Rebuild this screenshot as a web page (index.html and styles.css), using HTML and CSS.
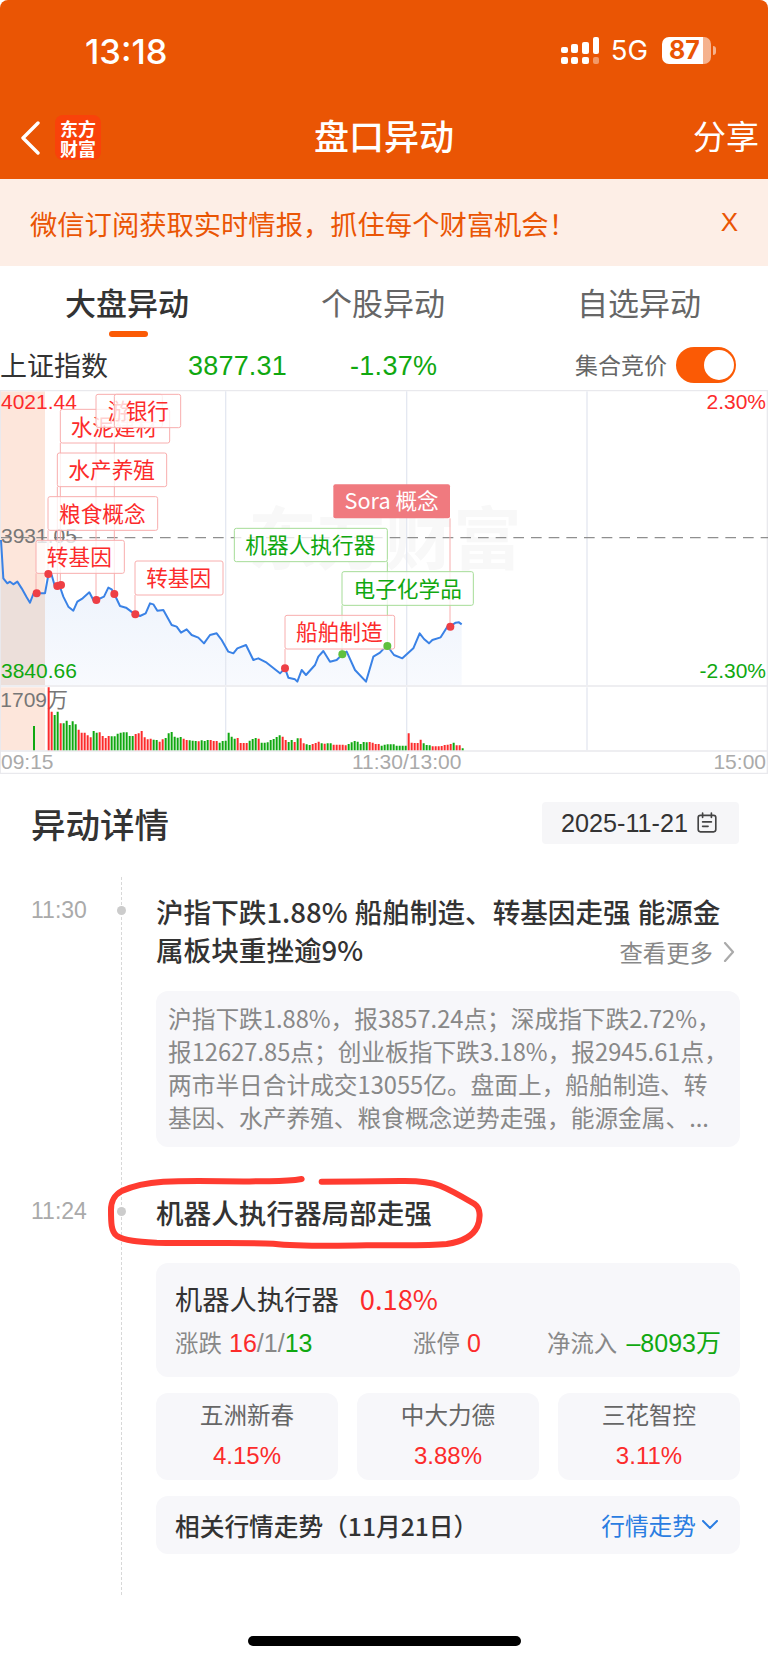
FILE: index.html
```html
<!DOCTYPE html>
<html lang="zh-CN">
<head>
<meta charset="utf-8">
<title>盘口异动</title>
<link rel="stylesheet" href="styles.css">
</head>
<body>
<div class="page">
  <header class="hdr">
    <div class="status">
      <span class="clock">13:18</span>
      <div class="status-right">
        <svg class="signal" viewBox="0 0 38 27" width="38" height="27">
          <g fill="#fff">
            <rect x="0" y="10" width="7" height="6" rx="2"/><rect x="0" y="20" width="7" height="7" rx="2"/>
            <rect x="10" y="7" width="7" height="9" rx="2"/><rect x="10" y="20" width="7" height="7" rx="2"/>
            <rect x="21" y="5" width="7" height="12" rx="2"/><rect x="21" y="20" width="7" height="7" rx="2"/>
            <rect x="32" y="0" width="6" height="17" rx="2"/><rect x="32" y="20" width="6" height="7" rx="2" opacity=".4"/>
          </g>
        </svg>
        <span class="net">5G</span>
        <span class="battery">87</span>
        <span class="batt-nub"></span>
      </div>
    </div>
    <nav class="navbar">
      <svg class="back" viewBox="0 0 20 34" width="20" height="34"><path d="M18 2 3 17l15 15" fill="none" stroke="#fff" stroke-width="3.4" stroke-linecap="round" stroke-linejoin="round"/></svg>
      <div class="logo"><span>东方</span><span>财富</span></div>
      <h1 class="title">盘口异动</h1>
      <span class="share">分享</span>
    </nav>
  </header>

  <div class="banner"><span>微信订阅获取实时情报，抓住每个财富机会！</span><span class="close">X</span></div>

  <div class="tabs">
    <div class="tab active">大盘异动</div>
    <div class="tab">个股异动</div>
    <div class="tab">自选异动</div>
  </div>

  <div class="quote">
    <span class="q-name">上证指数</span>
    <span class="q-price">3877.31</span>
    <span class="q-pct">-1.37%</span>
    <span class="q-label">集合竞价</span>
    <span class="toggle"><span class="knob"></span></span>
  </div>

  <svg class="chart" viewBox="0 150 2304 1155" width="768" height="385">
    <defs>
      <linearGradient id="areaFill" x1="0" y1="0" x2="0" y2="1">
        <stop offset="0" stop-color="#edf3fc"/>
        <stop offset="1" stop-color="#f8fafe"/>
      </linearGradient>
    </defs>
    <rect class="shade" x="0" y="154" width="135" height="881"/>
    <rect class="shade" x="0" y="1042" width="135" height="189"/>
    <text class="wm" x="745" y="672">东方财富</text>
    <path class="area-left" d="M3 600 10 715 22 730 30 725 40 733 52 725 65 745 80 772 90 788 100 762 110 760 135 760V1035H0V600Z"/>
    <path class="area" d="M135 760 145 705 155 705 165 740 178 735 190 770 205 800 220 812 232 785 248 775 268 757 280 780 290 780 312 770 325 743 335 748 343 762 360 798 378 803 405 823 420 828 437 820 450 790 460 793 472 812 490 810 515 855 530 860 543 878 560 868 575 885 595 893 612 910 630 885 650 880 665 900 685 935 700 940 712 925 738 915 760 960 775 955 800 968 840 1000 855 985 865 1013 885 1018 892 1025 905 990 918 1005 945 975 955 950 970 933 990 965 1010 960 1027 943 1040 935 1065 990 1098 1025 1120 950 1140 938 1152 925 1162 918 1182 945 1207 955 1240 925 1259 880 1272 897 1287 910 1297 900 1322 892 1342 860 1352 858 1367 848 1377 847 1385 853V1035H135Z"/>
    <path class="grid" d="M677 154V1035M677 1042V1231M1220 154V1035M1220 1042V1231M1761 154V1035M1761 1042V1231"/>
    <path class="frame" d="M0 152H2304M0 1038H2304M0 1233H2304M0 1300H2304M1 152V1300M2302 152V1300"/>
    <path class="dash" d="M3 593H2304"/>

    <text class="ax red" x="3" y="207">4021.44</text>
    <text class="ax grey" x="3" y="610">3931.05</text>
    <text class="ax green" x="3" y="1014">3840.66</text>
    <text class="ax red end" x="2298" y="207">2.30%</text>
    <text class="ax green end" x="2298" y="1014">-2.30%</text>
    <text class="ax grey" x="1" y="1100">1709万</text>
    <text class="ax light" x="3" y="1286">09:15</text>
    <text class="ax light mid" x="1220" y="1286">11:30/13:00</text>
    <text class="ax light end" x="2298" y="1286">15:00</text>

    <path class="bars-r" d="M146 1042V1231M155 1115V1231M182 1150V1231M236 1169V1231M245 1178V1231M254 1178V1231M263 1186V1231M272 1192V1231M299 1177V1231M308 1188V1231M317 1194V1231M326 1188V1231M407 1182V1231M416 1180V1231M425 1173V1231M434 1192V1231M443 1198V1231M452 1196V1231M479 1205V1231M488 1198V1231M551 1196V1231M560 1200V1231M596 1204V1231M632 1200V1231M641 1203V1231M650 1203V1231M713 1194V1231M722 1209V1231M731 1209V1231M740 1209V1231M776 1196V1231M848 1190V1231M857 1200V1231M884 1206V1231M902 1195V1231M911 1210V1231M938 1212V1231M947 1209V1231M956 1205V1231M974 1211V1231M1001 1214V1231M1010 1214V1231M1019 1214V1231M1028 1214V1231M1037 1216V1231M1109 1206V1231M1118 1208V1231M1127 1212V1231M1136 1212V1231M1226 1180V1231M1235 1208V1231M1244 1209V1231M1253 1209V1231M1262 1199V1231M1298 1219V1231M1307 1219V1231M1316 1219V1231M1325 1218V1231M1334 1215V1231M1343 1214V1231M1352 1212V1231M1370 1216V1231M1379 1216V1231"/>
    <path class="bars-g" d="M102 1158V1231M164 1125V1231M173 1115V1231M191 1150V1231M200 1142V1231M209 1155V1231M218 1144V1231M227 1153V1231M281 1173V1231M290 1178V1231M335 1189V1231M344 1189V1231M353 1181V1231M362 1178V1231M371 1177V1231M380 1177V1231M389 1188V1231M398 1188V1231M461 1199V1231M470 1200V1231M497 1194V1231M506 1180V1231M515 1176V1231M524 1190V1231M533 1193V1231M542 1191V1231M569 1201V1231M578 1202V1231M587 1203V1231M605 1201V1231M614 1203V1231M623 1200V1231M659 1208V1231M668 1203V1231M677 1202V1231M686 1178V1231M695 1190V1231M704 1196V1231M749 1202V1231M758 1197V1231M767 1194V1231M785 1208V1231M794 1208V1231M803 1207V1231M812 1200V1231M821 1197V1231M830 1191V1231M839 1186V1231M866 1206V1231M875 1200V1231M893 1195V1231M920 1213V1231M929 1215V1231M965 1210V1231M983 1210V1231M992 1210V1231M1046 1212V1231M1055 1207V1231M1064 1203V1231M1073 1205V1231M1082 1212V1231M1091 1206V1231M1100 1207V1231M1145 1217V1231M1154 1214V1231M1163 1213V1231M1172 1213V1231M1181 1213V1231M1190 1217V1231M1199 1217V1231M1208 1217V1231M1217 1217V1231M1271 1210V1231M1280 1215V1231M1289 1216V1231M1361 1208V1231M1388 1225V1231"/>

    <path class="stem-r" d="M181 309V735M172 440V738M144 571V702M108 700V760M405 765V823M855 927V985M288 262V780M343 263V762M1350 535V860"/>
    <path class="stem-g" d="M1162 665V918M1026 796V943"/>
    <polyline class="line" points="3,600 10,715 22,730 30,725 40,733 52,725 65,745 80,772 90,788 100,762 110,760 135,760 145,705 155,705 165,740 178,735 190,770 205,800 220,812 232,785 248,775 268,757 280,780 290,780 312,770 325,743 335,748 343,762 360,798 378,803 405,823 420,828 437,820 450,790 460,793 472,812 490,810 515,855 530,860 543,878 560,868 575,885 595,893 612,910 630,885 650,880 665,900 685,935 700,940 712,925 738,915 760,960 775,955 800,968 840,1000 855,985 865,1013 885,1018 892,1025 905,990 918,1005 945,975 955,950 970,933 990,965 1010,960 1027,943 1040,935 1065,990 1098,1025 1120,950 1140,938 1152,925 1162,918 1182,945 1207,955 1240,925 1259,880 1272,897 1287,910 1297,900 1322,892 1342,860 1352,858 1367,848 1377,847 1385,853"/>

    <rect class="tag-r" x="181" y="208" width="328" height="101" rx="6"/>
    <text class="tag-tx red" x="342" y="284">水泥建材</text>
    <rect class="tag-r" x="288" y="163" width="199" height="99" rx="6"/>
    <text class="tag-tx red" x="356" y="238">游</text>
    <rect class="tag-r" x="343" y="163" width="199" height="100" rx="6"/>
    <text class="tag-tx red" x="442" y="238">银行</text>
    <rect class="tag-r" x="172" y="339" width="328" height="101" rx="6"/>
    <text class="tag-tx red" x="335" y="414">水产养殖</text>
    <rect class="tag-r" x="144" y="470" width="329" height="101" rx="6"/>
    <text class="tag-tx red" x="307" y="545">粮食概念</text>
    <rect class="tag-r" x="108" y="601" width="265" height="99" rx="6"/>
    <text class="tag-tx red" x="238" y="675">转基因</text>
    <rect class="tag-r" x="405" y="663" width="264" height="102" rx="6"/>
    <text class="tag-tx red" x="536" y="738">转基因</text>
    <rect class="tag-r" x="855" y="826" width="329" height="101" rx="6"/>
    <text class="tag-tx red" x="1018" y="901">船舶制造</text>
    <rect class="tag-g" x="703" y="565" width="459" height="100" rx="6"/>
    <text class="tag-tx green" x="931" y="640">机器人执行器</text>
    <rect class="tag-g" x="1026" y="695" width="394" height="101" rx="6"/>
    <text class="tag-tx green" x="1223" y="770">电子化学品</text>
    <rect class="tag-solid" x="1000" y="433" width="350" height="102" rx="6"/>
    <text class="tag-tx white" x="1175" y="507">Sora 概念</text>

    <g class="dot-r">
      <circle cx="110" cy="760" r="12"/><circle cx="145" cy="702" r="12"/><circle cx="172" cy="738" r="12"/><circle cx="183" cy="735" r="12"/><circle cx="289" cy="780" r="12"/><circle cx="343" cy="762" r="12"/><circle cx="406" cy="823" r="12"/><circle cx="855" cy="985" r="12"/><circle cx="1351" cy="860" r="12"/>
    </g>
    <g class="dot-g"><circle cx="1027" cy="943" r="12"/><circle cx="1162" cy="918" r="12"/></g>
  </svg>

  <section class="detail">
    <div class="detail-head">
      <h2 class="detail-title">异动详情</h2>
      <div class="date-pill">
        <span>2025-11-21</span>
        <svg viewBox="0 0 20 20" width="22" height="22"><path d="M4 3h12a2 2 0 0 1 2 2v11a2 2 0 0 1-2 2H4a2 2 0 0 1-2-2V5a2 2 0 0 1 2-2ZM6 1v4M14 1v4M6 9h8M6 13h5" fill="none" stroke="#444" stroke-width="1.5" stroke-linecap="round"/></svg>
      </div>
    </div>

    <div class="timeline">
      <article class="item">
        <time class="t">11:30</time>
        <div class="body">
          <div class="h"><div>沪指下跌1.88% 船舶制造、转基因走强 能源金</div>
            <div class="h-row"><span>属板块重挫逾9%</span><span class="more">查看更多<svg viewBox="0 0 12 20" width="12" height="20"><path d="M2 1l8 9-8 9" fill="none" stroke="#aaa" stroke-width="2.2" stroke-linecap="round" stroke-linejoin="round"/></svg></span></div>
          </div>
          <div class="summary">
            <div>沪指下跌1.88%，报3857.24点；深成指下跌2.72%，</div>
            <div>报12627.85点；创业板指下跌3.18%，报2945.61点，</div>
            <div>两市半日合计成交13055亿。盘面上，船舶制造、转</div>
            <div>基因、水产养殖、粮食概念逆势走强，能源金属、...</div>
          </div>
        </div>
      </article>

      <article class="item second">
        <time class="t">11:24</time>
        <div class="body">
          <div class="h">机器人执行器局部走强</div>
          <div class="sector">
            <div class="sector-top"><span>机器人执行器</span><span class="red-t">0.18%</span></div>
            <div class="sector-stats">
              <span class="st-a">涨跌 <b class="red-t">16</b><b>/1/</b><b class="green-t">13</b></span>
              <span class="st-b">涨停 <b class="red-t">0</b></span>
              <span class="st-c">净流入 <b class="green-t">–8093万</b></span>
            </div>
          </div>
          <div class="stocks">
            <div class="stock"><div class="s-name">五洲新春</div><div class="s-pct">4.15%</div></div>
            <div class="stock"><div class="s-name">中大力德</div><div class="s-pct">3.88%</div></div>
            <div class="stock"><div class="s-name">三花智控</div><div class="s-pct">3.11%</div></div>
          </div>
          <div class="trend">
            <span>相关行情走势（11月21日）</span>
            <span class="trend-link">行情走势<svg viewBox="0 0 16 10" width="16" height="10"><path d="M1 1l7 7 7-7" fill="none" stroke="#2a7de1" stroke-width="2" stroke-linecap="round" stroke-linejoin="round"/></svg></span>
          </div>
        </div>
      </article>
    </div>
  </section>

  <svg class="ink" viewBox="0 0 1200 300" width="400" height="100">
    <path d="M605 42C560 50 520 48 480 49C380 50 280 46 190 50C130 54 95 64 65 78C40 92 33 110 33 135C33 170 33 200 50 212C75 228 115 230 170 233C300 236 440 232 520 236C600 245 700 243 800 241C900 240 980 243 1040 237C1090 230 1120 210 1132 185C1142 160 1142 130 1125 118C1095 100 1060 78 1020 62C990 50 950 47 900 48C830 48 740 50 665 50" fill="none" stroke="#ff3b30" stroke-width="18" stroke-linecap="round" stroke-linejoin="round"/>
  </svg>

  <div class="home-bar"></div>
</div>
</body>
</html>
```
FILE: styles.css
```css
* { box-sizing: border-box; }
html, body { margin: 0; padding: 0; background: #fff; }
body { font-family: "Noto Sans CJK SC", "Liberation Sans", sans-serif; color: #333; }
.page { position: relative; width: 768px; height: 1663px; overflow: hidden; }
h1, h2 { margin: 0; font-weight: 500; }

.hdr { height: 179px; background: #ea5504; color: #fff; border-radius: 8px 8px 0 0; display: flex; flex-direction: column; }
.status { height: 100px; padding: 37px 0 0 85px; display: flex; justify-content: space-between; align-items: flex-start; }
.clock { font-family: Inter, "Liberation Sans", sans-serif; font-size: 34.5px; line-height: 27px; font-weight: 500; margin-top: 1px; }
.status-right { display: flex; align-items: center; height: 27px; margin-right: 52px; }
.signal { display: block; }
.net { font-family: Inter, "Liberation Sans", sans-serif; font-size: 27.5px; line-height: 27px; margin: 0 14px 0 12px; }
.battery { width: 49px; height: 27px; border-radius: 7px; background: linear-gradient(90deg, #fff 84%, rgba(255,255,255,.55) 84%); color: #ea5504; font-family: Inter, "Liberation Sans", sans-serif; font-weight: 700; font-size: 25px; line-height: 27px; padding-left: 7px; }
.batt-nub { width: 3px; height: 9px; margin-left: 2px; border-radius: 0 3px 3px 0; background: rgba(255,255,255,.55); }

.navbar { position: relative; flex: 1; display: flex; align-items: center; padding-left: 20px; }
.back { display: block; margin-top: -4px; }
.logo { width: 46px; height: 45px; margin-left: 15px; margin-top: -4px; border-radius: 8px; background: #f9420a; display: flex; flex-direction: column; align-items: center; justify-content: center; font-family: "Noto Sans CJK SC", sans-serif; font-weight: 700; font-size: 18px; line-height: 20px; }
.title { flex: 1; text-align: center; font-size: 35px; line-height: 40px; margin-left: -26px; margin-top: -10px; }
.share { font-size: 33px; line-height: 40px; padding-right: 9px; margin-top: -10px; }

.banner { height: 87px; background: #fdeee6; color: #ea5504; display: flex; align-items: center; justify-content: space-between; padding: 0 30px 0 30px; font-size: 27.3px; }
.close { font-family: "Liberation Sans", sans-serif; font-size: 26px; }

.tabs { display: grid; grid-template-columns: repeat(3, 1fr); height: 72px; margin: 0 1px 0 -1px; }
.tab { position: relative; text-align: center; font-size: 31px; line-height: 40px; padding-top: 16px; color: #666; }
.tab.active { color: #333; font-weight: 500; }
.tab.active::after { content: ""; position: absolute; left: 110px; top: 65px; width: 39px; height: 6px; border-radius: 3px; background: #fb5a05; }

.quote { height: 52px; display: flex; align-items: center; position: relative; }
.q-name { font-size: 27px; width: 188px; }
.q-price { font-family: "Liberation Sans", sans-serif; font-size: 27px; letter-spacing: .2px; color: #10a810; width: 162px; margin-top: 4px; }
.q-pct { font-family: "Liberation Sans", sans-serif; font-size: 27px; letter-spacing: .3px; color: #10a810; width: 225px; margin-top: 4px; }
.q-label { font-size: 23px; color: #666; width: 101px; }
.toggle { width: 60px; height: 36px; border-radius: 18px; background: #fb5a05; padding: 3px 2px; display: flex; justify-content: flex-end; margin-top: 2px; }
.knob { width: 30px; height: 30px; border-radius: 50%; background: #fff; }

.chart { display: block; }
.chart text { font-family: "Liberation Sans", "Noto Sans CJK SC", sans-serif; }
.shade { fill: #fde6db; }
.wm { font-family: "Noto Sans CJK SC", sans-serif !important; font-size: 205px; font-weight: 700; fill: #f8f8f8; }
.area-left { fill: #ecdfda; }
.area { fill: url(#areaFill); }
.grid { stroke: #e4e8f1; stroke-width: 4; fill: none; }
.frame { stroke: #e9e9ed; stroke-width: 4; fill: none; }
.dash { stroke: #8f8f8f; stroke-width: 3.5; stroke-dasharray: 32 21; fill: none; }
.ax { font-size: 63px; }
.end { text-anchor: end; }
.mid { text-anchor: middle; }
.red { fill: #fc2b2b; }
.green { fill: #10a810; }
.grey { fill: #777; }
.light { fill: #aaa; }
.white { fill: #fff; }
.bars-r { stroke: #fc2b2b; stroke-width: 6; fill: none; }
.bars-g { stroke: #10a810; stroke-width: 6; fill: none; }
.stem-r { stroke: #f8aeae; stroke-width: 3; fill: none; }
.stem-g { stroke: #a5dc97; stroke-width: 3; fill: none; }
.line { stroke: #3a82e6; stroke-width: 6; fill: none; stroke-linejoin: round; }
.tag-r { fill: rgba(255,255,255,.78); stroke: #f8aeae; stroke-width: 3; }
.tag-g { fill: rgba(255,255,255,.78); stroke: #a5dc97; stroke-width: 3; }
.tag-solid { fill: #f07a7f; }
.chart .tag-tx { font-family: "Noto Sans CJK SC", sans-serif; font-size: 65px; text-anchor: middle; }
.dot-r { fill: #ee3f45; }
.dot-g { fill: #5fc03e; }

.detail { padding: 27px 29px 0 31px; }
.detail-head { display: flex; justify-content: space-between; align-items: center; height: 42px; }
.detail-title { font-size: 34.5px; line-height: 42px; }
.date-pill { width: 197px; height: 42px; background: #f6f6f8; border-radius: 4px; display: flex; align-items: center; gap: 8px; padding-left: 19px; font-family: "Liberation Sans", sans-serif; font-size: 25.2px; color: #333; white-space: nowrap; }
.date-pill svg { display: block; }

.timeline { position: relative; margin: 48px -1px 0 0; }
.timeline::before { content: ""; position: absolute; left: 90px; top: -15px; height: 718px; border-left: 1px dashed #d8d8d8; }
.item { display: flex; }
.item.second { margin-top: 46px; }
.t { position: relative; width: 125px; flex: none; font-family: "Liberation Sans", sans-serif; font-size: 23px; line-height: 37px; color: #aaa; }
.t::after { content: ""; position: absolute; left: 86px; top: 14px; width: 9px; height: 9px; border-radius: 50%; background: #ccc; }
.body { flex: 1; min-width: 0; }
.h { font-size: 27.6px; line-height: 38px; font-weight: 500; color: #333; white-space: nowrap; word-spacing: .8px; }
.h-row { display: flex; justify-content: space-between; align-items: center; height: 38px; }
.more { display: flex; align-items: center; gap: 10px; height: 30px; font-size: 23.4px; line-height: 30px; font-weight: 400; color: #888; padding-right: 5px; margin-top: 6px; }
.more svg { display: block; }
.summary { margin-top: 23px; background: #f7f7fa; border-radius: 12px; height: 156px; padding: 11px 0 0 12px; font-size: 23.7px; line-height: 33px; color: #888; white-space: nowrap; }

.sector { margin-top: 32px; height: 114px; background: #f7f7fa; border-radius: 12px; padding: 16px 19px 0; }
.sector-top { display: flex; gap: 21px; font-size: 27.3px; line-height: 38px; }
.red-t { color: #fc2b2b; }
.green-t { color: #10a810; }
.sector-stats { margin-top: 8px; font-size: 23.4px; line-height: 34px; color: #888; display: flex; white-space: nowrap; }
.sector-stats b { font-weight: 400; font-family: "Liberation Sans", sans-serif; font-size: 25px; }
.st-a { width: 238px; }
.st-a b:first-of-type, .st-b b { margin-left: 2px; }
.st-b { width: 134px; }
.sector-stats .st-c b { margin-left: 4px; }
.stocks { margin-top: 16px; display: grid; grid-template-columns: repeat(3, 1fr); gap: 19px; }
.stock { height: 87px; background: #f7f7fa; border-radius: 12px; text-align: center; padding-top: 5px; }
.s-name { font-size: 23.6px; line-height: 33px; color: #666; }
.s-pct { font-family: "Liberation Sans", sans-serif; font-size: 24px; line-height: 34px; margin-top: 8px; color: #fc2b2b; }
.trend { margin-top: 16px; height: 58px; background: #f7f7fa; border-radius: 12px; padding: 0 22px 0 19px; display: flex; align-items: center; justify-content: space-between; font-size: 24.7px; font-weight: 500; color: #333; }
.trend-link { display: flex; align-items: center; gap: 6px; font-size: 23.7px; font-weight: 400; color: #2a7de1; }
.trend-link svg { display: block; }

.ink { position: absolute; left: 100px; top: 1165px; overflow: visible; }
.home-bar { position: absolute; left: 248px; top: 1636px; width: 273px; height: 10px; border-radius: 5px; background: #000; }
```
